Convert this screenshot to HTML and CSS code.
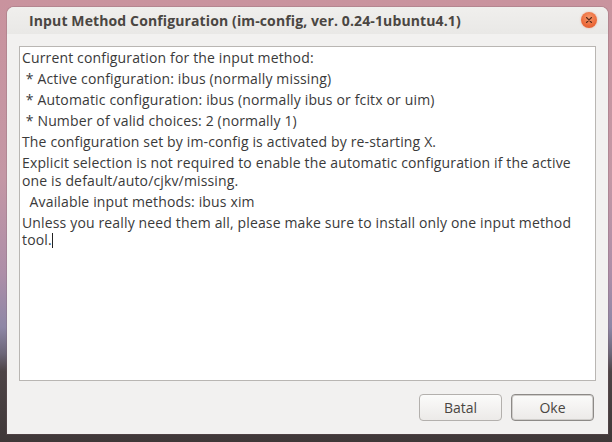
FILE: index.html
```
<!DOCTYPE html>
<html>
<head>
<meta charset="utf-8">
<link rel="stylesheet" href="styles.css">
</head>
<body>
<div class="window">
  <div class="titlebar">
    <span class="title">Input Method Configuration (im-config, ver. 0.24-1ubuntu4.1)</span>
    <span class="close"><svg width="8" height="8" viewBox="0 0 8 8"><path d="M1.5 1.5 L6.5 6.5 M6.5 1.5 L1.5 6.5" stroke="#5a2a1a" stroke-width="1.1" stroke-linecap="round"/></svg></span>
  </div>
  <div class="content">
    <div class="textview">
      <p class="para">Current configuration for the input method:</p>
      <p class="para"> * Active configuration: ibus (normally missing)</p>
      <p class="para"> * Automatic configuration: ibus (normally ibus or fcitx or uim)</p>
      <p class="para"> * Number of valid choices: 2 (normally 1)</p>
      <p class="para">The configuration set by im-config is activated by re-starting X.</p>
      <p class="para">Explicit selection is not required to enable the automatic configuration if the active<br>one is default/auto/cjkv/missing.</p>
      <p class="para">  Available input methods: ibus xim</p>
      <p class="para">Unless you really need them all, please make sure to install only one input method<br>tool.<span class="caret"></span></p>
    </div>
    <div class="buttons">
      <button class="btn">Batal</button>
      <button class="btn btn-default">Oke</button>
    </div>
  </div>
</div>
</body>
</html>
```
FILE: styles.css
```
html, body {
  margin: 0;
  padding: 0;
}
body {
  width: 612px;
  height: 442px;
  overflow: hidden;
  background: linear-gradient(180deg, #c9939e 0%, #c497a5 40%, #ad8ea8 62%, #8e87a6 74%, #6c6678 80%, #4d4446 84%, #3f3838 100%);
  font-family: "Open Sans", "DejaVu Sans", sans-serif;
  padding: 7px 4px 0 7px;
  box-sizing: border-box;
}
.window {
  width: 601px;
  height: 427px;
  background: #f2f1f0;
  border-radius: 7px 7px 0 0;
  display: flex;
  flex-direction: column;
  box-shadow: 0 0 0 1px rgba(120, 90, 100, 0.25);
}
.titlebar {
  height: 27px;
  display: flex;
  align-items: center;
  padding: 0 0 0 22px;
  background: linear-gradient(180deg, #f0efed 0%, #e9e8e6 100%);
  border-radius: 7px 7px 0 0;
  position: relative;
}
.title {
  font-weight: 700;
  font-size: 14px;
  letter-spacing: 0.12px;
  color: #4a4642;
}
.close {
  position: absolute;
  left: 574px;
  top: 5px;
  width: 16px;
  height: 16px;
  border-radius: 50%;
  background: radial-gradient(circle at 50% 35%, #f69a6d 0%, #ec6a3a 60%, #d9552a 100%);
  box-shadow: 0 0 2px rgba(230, 110, 60, 0.5);
  display: flex;
  align-items: center;
  justify-content: center;
}
.content {
  flex: 1;
  display: flex;
  flex-direction: column;
  padding: 12px 12px 0 12px;
}
.textview {
  height: 335px;
  box-sizing: border-box;
  border: 1px solid #b9b6b3;
  background: #ffffff;
  padding: 2px 2px;
}
.para {
  margin: 0 0 3.5px 0;
  white-space: pre;
  font-size: 14px;
  letter-spacing: 0.15px;
  line-height: 17.5px;
  color: #3a3a3a;
}
.caret {
  display: inline-block;
  width: 1px;
  height: 15px;
  background: #222;
  vertical-align: -3px;
}
.buttons {
  display: flex;
  justify-content: flex-end;
  gap: 9px;
  padding: 13px 2px 0 0;
}
.btn {
  width: 83px;
  height: 27px;
  border: 1px solid #b3b0ad;
  border-radius: 4px;
  background: linear-gradient(180deg, #fbfbfa 0%, #eceae8 100%);
  font-family: inherit;
  font-size: 14px;
  color: #4a4642;
  padding: 0;
}
.btn-default {
  border: 1px solid #8d8a87;
  box-shadow: inset 0 0 0 1px #d0cecb;
}
```
